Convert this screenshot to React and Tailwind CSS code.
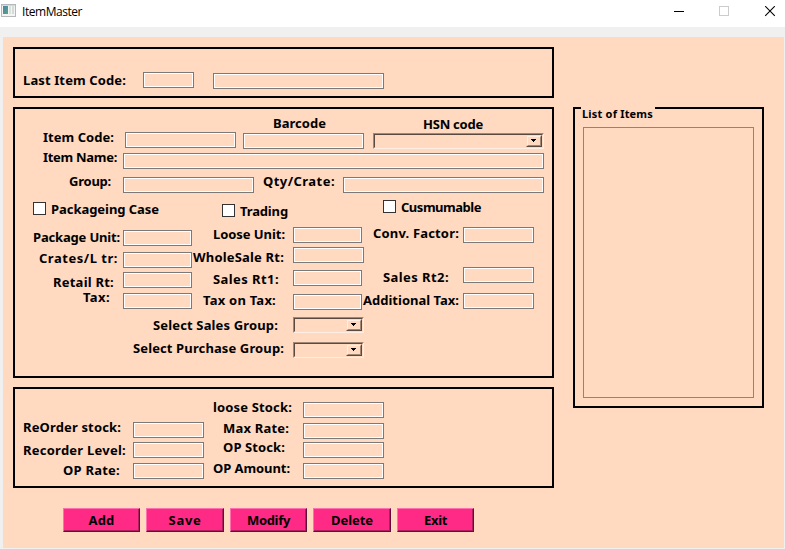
import { useLayoutEffect, useRef, useState } from "react";

// Spreads the letters of a caption evenly over the width of its box.
function Label({ children, className }) {
  const box = useRef(null);
  const text = useRef(null);
  const [spacing, setSpacing] = useState(0);
  useLayoutEffect(() => {
    const natural = text.current.getBoundingClientRect().width;
    setSpacing((box.current.clientWidth - natural) / children.length);
  }, []);
  return (
    <div ref={box} className={`h-4 shrink-0 leading-4 whitespace-nowrap ${className}`}>
      <span ref={text} style={{ letterSpacing: `${spacing}px` }}>{children}</span>
    </div>
  );
}

function Field({ className }) {
  return (
    <input
      readOnly
      className={`h-4 shrink-0 border border-[#7a7a7a] bg-[#ffd9c0] inset-ring inset-ring-white outline-none ${className}`}
    />
  );
}

function Check({ className }) {
  return <div className={`size-[13px] shrink-0 border border-[#333333] bg-white ${className}`} />;
}

function Combo({ className }) {
  return (
    <div className={`h-4 shrink-0 border border-t-[#a08878] border-r-[#ffeee3] border-b-[#ffeee3] border-l-[#a08878] ${className}`}>
      <div className="flex h-full justify-end border border-t-[#5b4a40] border-r-[#ffd9c0] border-b-[#ffd9c0] border-l-[#5b4a40]">
        <div className="h-3 w-4 border border-t-[#ffd9c0] border-r-[#5b4a40] border-b-[#5b4a40] border-l-[#ffd9c0]">
          <div className="flex h-full items-start border border-t-[#ffeee3] border-r-[#a08878] border-b-[#a08878] border-l-[#ffeee3] pt-[2px] pl-[3px]">
            <svg width="5" height="3" viewBox="0 0 5 3" shapeRendering="crispEdges">
              <path d="M0 0h5v1H0zM1 1h3v1H1zM2 2h1v1H2z" />
            </svg>
          </div>
        </div>
      </div>
    </div>
  );
}

function Row({ className, children }) {
  return <div className={`flex items-start ${className}`}>{children}</div>;
}

function Button({ className, label, labelClass }) {
  return (
    <button
      className={`flex h-6 items-center justify-center border border-t-[#ff6fae] border-r-[#5e1035] border-b-[#5e1035] border-l-[#ff6fae] bg-[#ff2a85] inset-shadow-[-1px_-1px_0_#b01f5e] ${className}`}
    >
      <Label className={labelClass}>{label}</Label>
    </button>
  );
}

function TitleBar() {
  return (
    <div className="flex h-[27px] items-start bg-white font-['Open_Sans','Noto_Sans',sans-serif] text-[12px] font-normal">
      <svg className="mt-1 ml-px shrink-0" width="16" height="14" viewBox="0 0 16 14">
        <defs>
          <linearGradient id="screen" x1="0" y1="0" x2="1" y2="1">
            <stop offset="0" stopColor="#4d7fb0" />
            <stop offset="1" stopColor="#55a878" />
          </linearGradient>
        </defs>
        <rect x=".5" y=".5" width="14" height="12" fill="#f4f4f4" stroke="#b4b8ba" />
        <path d="M1 1.5h13" stroke="#d5dade" />
        <rect x="2" y="2" width="5" height="8" fill="url(#screen)" />
        <rect x="8" y="2" width="2" height="8" fill="#d5e4dd" />
        <rect x="11" y="2" width="2" height="8" fill="#d3dcd9" />
      </svg>
      <Label className="mt-1 ml-[5px] w-[60px]">ItemMaster</Label>
      <svg className="mt-[6px] ml-[592px] shrink-0" width="103" height="11" viewBox="0 0 103 11" fill="none">
        <path d="M0 5.5h10" stroke="#000" shapeRendering="crispEdges" />
        <rect x="45.5" y=".5" width="9" height="9" stroke="#ccc" shapeRendering="crispEdges" />
        <path d="M91.2 .2l9.6 9.6M100.8 .2l-9.6 9.6" stroke="#000" strokeWidth="1.1" />
      </svg>
    </div>
  );
}

export default function App() {
  return (
    <div className="h-[549px] w-[785px] overflow-hidden bg-[#f0f0f0] font-['Noto_Sans','DejaVu_Sans',sans-serif] text-[13px] font-bold text-black">
      <TitleBar />
      <div className="mt-[10px] ml-[3px] flex h-[511px] w-[781px] items-start bg-[#ffd9c0] pt-[10px] pl-[10px]">
        <div className="w-[541px] shrink-0">
          <section className="h-[51px] border-2 border-black">
            <Row className="pt-[23px]">
              <Label className="ml-2 w-[103px]">Last Item Code:</Label>
              <Field className="ml-[17px] w-[51px]" />
              <Field className="mt-px ml-[19px] w-[171px]" />
            </Row>
          </section>

          <section className="mt-[9px] h-[271px] border-2 border-black">
            <Row className="h-5">
              <Label className="mt-[6px] ml-[258px] w-[53px]">Barcode</Label>
              <Label className="mt-[7px] ml-[97px] w-[60px]">HSN code</Label>
            </Row>
            <Row className="h-5">
              <Label className="ml-7 w-[71px]">Item Code:</Label>
              <Field className="mt-[3px] ml-[11px] w-[111px]" />
              <Field className="mt-1 ml-[7px] w-[121px]" />
              <Combo className="mt-1 ml-[9px] w-[171px]" />
            </Row>
            <Row className="h-6">
              <Label className="ml-7 w-[74px]">Item Name:</Label>
              <Field className="mt-1 ml-[6px] w-[421px]" />
            </Row>
            <Row className="h-[26px]">
              <Label className="ml-[54px] w-[42px]">Group:</Label>
              <Field className="mt-1 ml-3 w-[131px]" />
              <Label className="ml-[9px] w-[72px]">Qty/Crate:</Label>
              <Field className="mt-1 ml-2 w-[201px]" />
            </Row>
            <Row className="h-[26px]">
              <Check className="mt-[3px] ml-[18px]" />
              <Label className="mt-[2px] ml-[5px] w-[108px]">Packageing Case</Label>
              <Check className="mt-[5px] ml-[63px]" />
              <Label className="mt-1 ml-[5px] w-[48px]">Trading</Label>
              <Check className="mt-px ml-[95px]" />
              <Label className="ml-[5px] w-[80px]">Cusmumable</Label>
            </Row>
            <Row className="h-[22px]">
              <Label className="mt-1 ml-[18px] w-[87px]">Package Unit:</Label>
              <Field className="mt-[5px] ml-[3px] w-[69px]" />
              <Label className="mt-px ml-[21px] w-[72px]">Loose Unit:</Label>
              <Field className="mt-[2px] ml-2 w-[69px]" />
              <Label className="ml-[11px] w-[86px]">Conv. Factor:</Label>
              <Field className="mt-[2px] ml-1 w-[71px]" />
            </Row>
            <Row className="h-5">
              <Label className="mt-[3px] ml-6 w-[79px]">Crates/L tr:</Label>
              <Field className="mt-[5px] ml-[5px] w-[69px]" />
              <Label className="mt-[2px] ml-px w-[91px]">WholeSale Rt:</Label>
              <Field className="ml-[9px] w-[71px]" />
            </Row>
            <Row className="h-[22px]">
              <Label className="mt-[7px] ml-[38px] w-[61px]">Retail Rt:</Label>
              <Field className="mt-[5px] ml-[9px] w-[69px]" />
              <Label className="mt-1 ml-[21px] w-[66px]">Sales Rt1:</Label>
              <Field className="mt-[3px] ml-[14px] w-[69px]" />
              <Label className="mt-[2px] ml-[21px] w-[66px]">Sales Rt2:</Label>
              <Field className="ml-[14px] w-[71px]" />
            </Row>
            <Row className="h-7">
              <Label className="ml-[68px] w-[27px]">Tax:</Label>
              <Field className="mt-1 ml-[13px] w-[69px]" />
              <Label className="mt-[3px] ml-[11px] w-[73px]">Tax on Tax:</Label>
              <Field className="mt-[5px] ml-[17px] w-[69px]" />
              <Label className="mt-[3px] ml-px w-[96px]">Additional Tax:</Label>
              <Field className="mt-1 ml-1 w-[71px]" />
            </Row>
            <Row className="h-[23px]">
              <Label className="ml-[138px] w-[125px]">Select Sales Group:</Label>
              <Combo className="ml-[15px] w-[71px]" />
            </Row>
            <Row className="h-5">
              <Label className="ml-[118px] w-[151px]">Select Purchase Group:</Label>
              <Combo className="mt-[2px] ml-[9px] w-[71px]" />
            </Row>
          </section>

          <section className="mt-[9px] h-[101px] border-2 border-black pt-[10px]">
            <Row className="h-5">
              <Label className="ml-[198px] w-[79px]">loose Stock:</Label>
              <Field className="mt-[3px] ml-[11px] w-[81px]" />
            </Row>
            <Row className="h-5">
              <Label className="ml-2 w-[98px]">ReOrder stock:</Label>
              <Field className="mt-[3px] ml-3 w-[71px]" />
              <Label className="mt-px ml-[19px] w-[66px]">Max Rate:</Label>
              <Field className="mt-1 ml-[14px] w-[81px]" />
            </Row>
            <Row className="h-[21px]">
              <Label className="mt-[3px] ml-2 w-[103px]">Recorder Level:</Label>
              <Field className="mt-[3px] ml-[7px] w-[71px]" />
              <Label className="ml-[19px] w-[62px]">OP Stock:</Label>
              <Field className="mt-[3px] ml-[18px] w-[81px]" />
            </Row>
            <Row className="h-5">
              <Label className="mt-[2px] ml-12 w-[57px]">OP Rate:</Label>
              <Field className="mt-[3px] ml-[13px] w-[71px]" />
              <Label className="ml-[9px] w-[77px]">OP Amount:</Label>
              <Field className="mt-[3px] ml-[13px] w-[81px]" />
            </Row>
          </section>

          <div className="mt-5 ml-[50px] flex gap-[6px]">
            <Button className="w-[77px]" label="Add" labelClass="w-[26px]" />
            <Button className="w-[78px]" label="Save" labelClass="w-[33px]" />
            <Button className="w-[77px]" label="Modify" labelClass="w-[43px]" />
            <Button className="w-[78px]" label="Delete" labelClass="w-[42px]" />
            <Button className="w-[77px]" label="Exit" labelClass="w-[23px]" />
          </div>
        </div>

        <section className="mt-[60px] ml-[19px] h-[301px] w-[191px] shrink-0 border-2 border-black">
          <div className="-mt-[2px] ml-[6px] h-5 w-[74px] bg-[#ffd9c0] pl-px text-[11px]">
            <Label className="-translate-y-px w-[71px]">List of Items</Label>
          </div>
          <div className="ml-2 h-[271px] w-[171px] border border-[#828790]" />
        </section>
      </div>
    </div>
  );
}
